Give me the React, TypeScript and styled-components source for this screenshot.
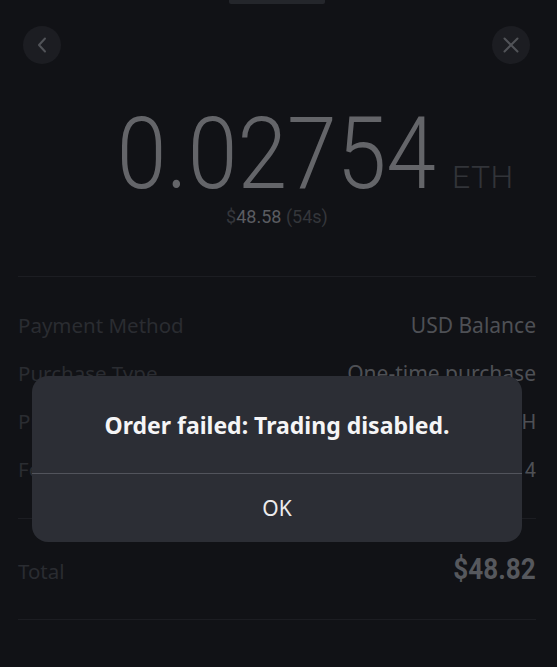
import React from "react";
import styled, { createGlobalStyle } from "styled-components";

const Global = createGlobalStyle`
  *, *::before, *::after { box-sizing: border-box; }
  html, body { margin: 0; padding: 0; background: #111216; }
  body { font-family: "Noto Sans", sans-serif; }
`;

const Page = styled.div`
  position: relative;
  width: 557px;
  height: 667px;
  background: #111216;
  overflow: hidden;
  display: flex;
  flex-direction: column;
`;

const Handle = styled.div`
  align-self: center;
  width: 96px;
  height: 4px;
  margin-left: -3px;
  background: #24262b;
  border-radius: 0 0 2px 2px;
`;

const Header = styled.div`
  display: flex;
  justify-content: space-between;
  padding: 22px 27px 0 23px;
`;

const IconButton = styled.button`
  width: 38px;
  height: 38px;
  padding: 0;
  border: none;
  border-radius: 50%;
  background: #1c1d22;
  color: #515358;
  display: flex;
  align-items: center;
  justify-content: center;
`;

const AmountRow = styled.div`
  display: grid;
  grid-template-columns: 1fr auto 1fr;
  align-items: baseline;
  margin-top: 52px;
  padding-right: 4px;
`;

const Amount = styled.span`
  grid-column: 2;
  font-family: Roboto, sans-serif;
  font-weight: 300;
  font-size: 100px;
  line-height: 76px;
  color: #646569;
  transform: scaleX(0.895);
`;

const Unit = styled.span`
  grid-column: 3;
  justify-self: start;
  margin-left: -3px;
  font-family: Roboto, sans-serif;
  font-weight: 300;
  font-size: 32px;
  line-height: 1;
  letter-spacing: 0.5px;
  color: #323439;
`;

const Fiat = styled.div`
  margin-top: 15px;
  padding-right: 3px;
  text-align: center;
  font-family: Roboto, sans-serif;
  font-size: 18px;
  line-height: 18px;
  color: #34363b;
`;

const FiatValue = styled.span`
  color: #5a5c61;
`;

const Divider = styled.div<{ $top?: number }>`
  height: 1px;
  margin: ${(p) => p.$top ?? 0}px 21px 0 18px;
  background: #1c1d22;
`;

const Section = styled.div<{ $pt: number; $pb: number }>`
  padding: ${(p) => p.$pt}px 21px ${(p) => p.$pb}px 18px;
`;

const Row = styled.div`
  display: flex;
  justify-content: space-between;
  align-items: baseline;
  height: 48px;
`;

const Label = styled.span`
  font-family: "Noto Sans", sans-serif;
  font-size: 20.5px;
  line-height: 48px;
  color: #2a2c31;
`;

const Value = styled.span<{ $num?: boolean }>`
  font-family: ${(p) => (p.$num ? "Roboto, sans-serif" : '"Noto Sans", sans-serif')};
  font-size: ${(p) => (p.$num ? "20px" : "21px")};
  letter-spacing: ${(p) => (p.$num ? "2.5px" : "0")};
  margin-right: ${(p) => (p.$num ? "-2.5px" : "0")};
  line-height: 48px;
  color: #4e5055;
`;

const TotalValue = styled.span`
  font-family: Roboto, sans-serif;
  font-weight: 700;
  font-size: 30px;
  line-height: 48px;
  color: #56585d;
  transform: scaleX(0.87);
  transform-origin: right center;
  display: inline-block;
`;

const Overlay = styled.div`
  position: absolute;
  inset: 0;
  display: flex;
  align-items: flex-start;
  justify-content: flex-start;
  padding: 376px 0 0 32px;
`;

const Dialog = styled.div`
  width: 490px;
  background: #2c2e35;
  border-radius: 16px;
  overflow: hidden;
  display: flex;
  flex-direction: column;
`;

const DialogTitle = styled.div`
  height: 98px;
  display: flex;
  align-items: center;
  justify-content: center;
  border-bottom: 1px solid #52545c;
  font-family: "Noto Sans", sans-serif;
  font-weight: 700;
  font-size: 23px;
  line-height: 30px;
  color: #f5f5f6;
`;

const DialogButton = styled.button`
  height: 68px;
  width: 100%;
  border: none;
  background: none;
  padding: 0;
  font-family: "Noto Sans", sans-serif;
  font-size: 21px;
  line-height: 28px;
  color: #ececee;
`;

export default function App() {
  return (
    <>
      <Global />
      <Page>
        <Handle />
        <Header>
          <IconButton aria-label="Back">
            <svg width="10" height="16" viewBox="0 0 10 16" fill="none">
              <polyline points="8,1.5 2,8 8,14.5" stroke="currentColor" strokeWidth="2" strokeLinecap="round" strokeLinejoin="round" />
            </svg>
          </IconButton>
          <IconButton aria-label="Close">
            <svg width="16" height="16" viewBox="0 0 16 16" fill="none">
              <path d="M1.5 1.5 L14.5 14.5 M14.5 1.5 L1.5 14.5" stroke="currentColor" strokeWidth="2" strokeLinecap="round" />
            </svg>
          </IconButton>
        </Header>
        <AmountRow>
          <Amount>0.02754</Amount>
          <Unit>ETH</Unit>
        </AmountRow>
        <Fiat>
          $<FiatValue>48.58</FiatValue> (54s)
        </Fiat>
        <Divider $top={50} />
        <Section $pt={24} $pb={25}>
          <Row>
            <Label>Payment Method</Label>
            <Value>USD Balance</Value>
          </Row>
          <Row>
            <Label>Purchase Type</Label>
            <Value>One-time purchase</Value>
          </Row>
          <Row>
            <Label>Price</Label>
            <Value $num>1 USD ≈ 0.00056689 ETH</Value>
          </Row>
          <Row>
            <Label>Fee</Label>
            <Value $num>$0.24</Value>
          </Row>
        </Section>
        <Divider />
        <Section $pt={26} $pb={26}>
          <Row>
            <Label>Total</Label>
            <TotalValue>$48.82</TotalValue>
          </Row>
        </Section>
        <Divider />
        <Overlay>
          <Dialog role="alertdialog">
            <DialogTitle>Order failed: Trading disabled.</DialogTitle>
            <DialogButton>OK</DialogButton>
          </Dialog>
        </Overlay>
      </Page>
    </>
  );
}
